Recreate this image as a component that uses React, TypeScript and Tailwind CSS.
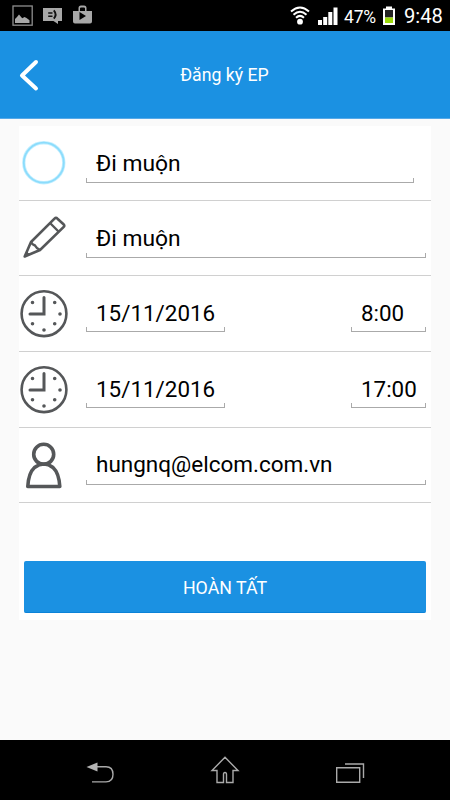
import React from 'react'
import clsx from 'clsx'

const StatusBar = () => (
  <div className="flex h-[31px] shrink-0 items-center justify-between bg-black pl-3 pr-[7px] text-white">
    <svg width="82" height="31" viewBox="0 0 82 31" fill="#a8a8a8">
      <rect x="1" y="6" width="19.2" height="19.2" fill="none" stroke="#8e8e8e" strokeWidth="1.3" />
      <path d="M3 23v-4l2-2 2-2.4 2.3 2.7 1 1 2.2-1.3 2 1 3 2.2V23z" />
      <path d="M31 8h19v13h-4v3l-4.5-3H31z" />
      <path d="M36.2 13h4.300M36.2 16.200h4.300" fill="none" stroke="#111" strokeWidth="1.5" />
      <path d="M41.800 10.300q3.600 4.200 0 8.400" fill="none" stroke="#111" strokeWidth="1.9" />
      <path d="M61 11h5.500V8q0-2.500 2.500-2.500h3q2.500 0 2.500 2.500v3H80v10.500q0 2-2 2H63q-2 0-2-2zM68 11h5V8.500q0-1-1-1h-3q-1 0-1 1z" fillRule="evenodd" />
      <path d="M67.500 12v8l6.500-4z" fill="#000" />
    </svg>
    <div className="flex h-full items-center">
      <svg width="48" height="31" viewBox="0 0 48 31" fill="#fff">
        <circle cx="10" cy="21.7" r="2.9" />
        <path d="M1 11.5q9-8 18 0M3.500 14.700q6.500-6 13 0M6 17.700q4-3.600 8 0" fill="none" stroke="#fff" strokeWidth="2" />
        <path d="M28 20h4v5h-4zM33.200 17h4v8h-4zM38.300 12h4v13h-4zM43.500 7.500h4V25h-4z" />
      </svg>
      <span className="ml-[6px] w-[33px] whitespace-nowrap pt-[2px] text-[17.5px] leading-[30px] tracking-[-0.2px]">47%</span>
      <svg className="ml-[5px]" width="14" height="31" viewBox="0 0 14 31">
        <path d="M4 6.500h6v2h3V25H1V8.500h3z" fill="#fff" />
        <path d="M3 10h8v7.500H3z" fill="#222" />
        <path d="M3 17.500h8V23H3z" fill="#9bd90a" />
      </svg>
      <span className="ml-2 w-[39px] whitespace-nowrap pt-px text-[20.2px] leading-[30px]">9:48</span>
    </div>
  </div>
)

const Header = () => (
  <div className="flex h-[88px] shrink-0 items-center border-b border-[#56a9e8] bg-[#1b91e2] text-white">
    <svg className="ml-[18px]" width="24" height="36" viewBox="0 0 24 36">
      <path d="M18 5L4 18.500 18 31.500" fill="none" stroke="#fff" strokeWidth="4" strokeLinecap="round" strokeLinejoin="round" />
    </svg>
    <span className="flex-1 pr-[43px] pt-px text-center text-[17.7px] leading-6">Đăng ký EP</span>
  </div>
)

const Field = ({ value, className }: { value: string; className?: string }) => (
  <div className={clsx('flex flex-col', className)}>
    <span className="whitespace-nowrap pl-[10px] leading-[26px] text-black">{value}</span>
    <div className="h-[5px] border-x border-b border-[#aaa]" />
  </div>
)

const Row = ({ icon, className, children }: { icon: React.ReactNode; className?: string; children: React.ReactNode }) => (
  <div className={clsx('flex items-end border-b border-[#d0d0d0]', className)}>
    <div className="flex w-[67px] shrink-0 self-stretch">{icon}</div>
    {children}
  </div>
)

const CircleIcon = () => (
  <svg width="50" height="74" viewBox="0 0 50 74" fill="none">
    <circle cx="24.8" cy="36.7" r="20" stroke="#c4efff" strokeWidth="3.4" />
    <circle cx="24.8" cy="36.7" r="20" stroke="#8bdcfc" strokeWidth="1.8" />
  </svg>
)

const PencilIcon = () => (
  <svg width="50" height="74" viewBox="0 0 50 74" fill="none" stroke="#555759" strokeWidth="2.6" strokeLinejoin="round">
    <path d="M5.700 55.500L12 41 35.500 17.700q1.500-1.500 3 0L44.500 23.200q1.500 1.500 0 3L21 49z" />
    <path d="M12 41q1 2.500 4 3.500 1.500 3 5 4.500M31 22l8.500 8.500" strokeWidth="2.4" />
    <path d="M5.700 55.500l2.200-4.500 2.400 2.200z" fill="#555759" strokeWidth="1" />
  </svg>
)

const ClockIcon = () => (
  <svg width="50" height="75" viewBox="0 0 50 75" fill="none" stroke="#555759">
    <circle cx="25" cy="37.7" r="22.4" strokeWidth="2.6" />
    <path d="M25 21.500V38H11" strokeWidth="3" strokeLinecap="round" />
    <path d="M13.500 26.500h.01M35.700 26.500h.01M41 38h.01M35.700 47.800h.01M25 54h.01M13.500 47.800h.01" strokeWidth="3.6" strokeLinecap="round" />
  </svg>
)

const UserIcon = () => (
  <svg width="50" height="74" viewBox="0 0 50 74" fill="none" stroke="#555759" strokeWidth="3.6" strokeLinejoin="round">
    <circle cx="24.7" cy="26.3" r="10" />
    <path d="M8.800 58.500h32q-.8-13.500-6.800-19-9-7-18.500 0-6 5.500-6.700 19z" />
  </svg>
)

const NavBar = () => (
  <div className="flex h-[60px] shrink-0 items-center justify-between bg-black px-[85px]">
    <svg width="30" height="60" viewBox="0 0 30 60" fill="none" stroke="#aaa" strokeWidth="1.4">
      <path d="M12 26.700h9q7 0 7 7.600t-7 7.600H7" />
      <path d="M1.500 27L12.500 22.500v9z" fill="#b4b4b4" stroke="none" />
    </svg>
    <svg width="30" height="60" viewBox="0 0 30 60" fill="none" stroke="#aaa" strokeWidth="1.4">
      <path d="M15 17.300L2 30.500h5v12h6.500v-8q0-2 1.500-2t1.500 2v8H23v-12h5z" />
    </svg>
    <svg width="30" height="60" viewBox="0 0 30 60" fill="none" stroke="#aaa" strokeWidth="1.4">
      <path d="M1.700 27.700h23v14.600h-23zM10 24h18.500v14" />
    </svg>
  </div>
)

export default function App() {
  return (
    <div className="flex h-[800px] w-[450px] flex-col overflow-hidden bg-[#fafafa] font-['Roboto','Noto_Sans',sans-serif]">
      <StatusBar />
      <Header />
      <div className="flex-1 px-[19px] pt-[7px]">
        <div className="h-[494px] w-[412px] bg-white text-[22.4px]">
          <Row icon={<CircleIcon />} className="h-[75px]">
            <Field value="Đi muộn" className="mb-[17px] w-[328px] gap-px text-[22.8px]" />
          </Row>
          <Row icon={<PencilIcon />} className="h-[75px]">
            <Field value="Đi muộn" className="mb-[17px] w-[340px] gap-px text-[22.8px]" />
          </Row>
          <Row icon={<ClockIcon />} className="h-[76px]">
            <Field value="15/11/2016" className="mb-[19px] w-[139px] gap-px" />
            <Field value="8:00" className="mb-[19px] ml-[126px] w-[75px] gap-px" />
          </Row>
          <Row icon={<ClockIcon />} className="h-[76px]">
            <Field value="15/11/2016" className="mb-[19px] w-[139px] gap-px" />
            <Field value="17:00" className="mb-[19px] ml-[126px] w-[75px] gap-px" />
          </Row>
          <Row icon={<UserIcon />} className="h-[75px]">
            <Field value="hungnq@elcom.com.vn" className="mb-[17px] w-[340px] gap-[3px] text-[22.5px]" />
          </Row>
          <div className="px-[5px] pt-[58px]">
            <button className="h-[52px] w-full rounded-[2px] border-b border-[#0c83d8] bg-[#1b91e2] pt-[3px] text-[17.8px] text-white">
              HOÀN TẤT
            </button>
          </div>
        </div>
      </div>
      <NavBar />
    </div>
  )
}
